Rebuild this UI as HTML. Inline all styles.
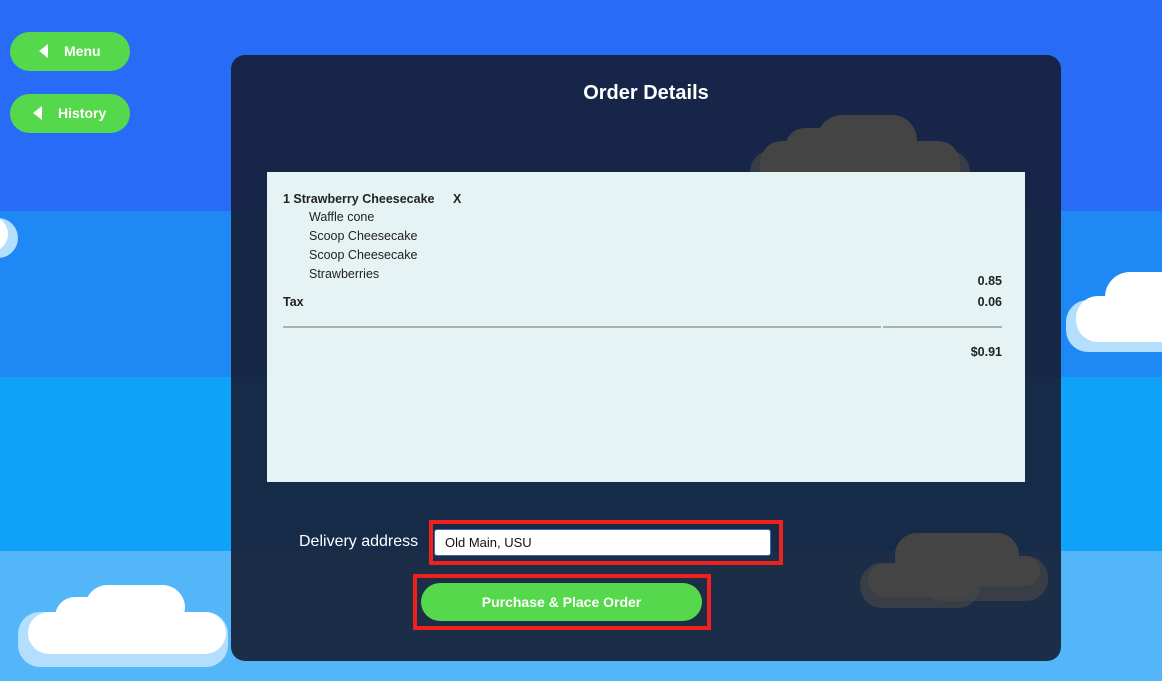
<!DOCTYPE html>
<html><head><style>
*{margin:0;padding:0;box-sizing:border-box}
body{width:1162px;height:681px;overflow:hidden;position:relative;font-family:"Liberation Sans",sans-serif;
background:linear-gradient(#276bf7 0 211px,#1e88f5 211px 377px,#10a1f9 377px 551px,#52b6f9 551px)}
.btn{position:absolute;left:10px;width:120px;height:39px;border-radius:20px;background:#55d84c;color:#fff;font-weight:bold;font-size:14px;line-height:39px}
.btn i{position:absolute;top:12px;width:0;height:0;border-top:7px solid transparent;border-bottom:7px solid transparent;border-right:9px solid #fff}
.c{position:absolute;border-radius:22px}
.panel{position:absolute;left:231px;top:55px;width:830px;height:606px;border-radius:14px;background:rgba(22,30,52,.9)}
.r{position:absolute;left:267px;top:172px;width:758px;height:310px;background:#e5f3f4;font-size:12.5px;color:#222}
.r div{position:absolute}
</style></head><body>
<div class="btn" style="top:32px"><i style="left:29px"></i><span style="position:absolute;left:54px">Menu</span></div>
<div class="btn" style="top:94px"><i style="left:23px"></i><span style="position:absolute;left:48px">History</span></div>
<div class="c" style="left:-30px;top:218px;width:48px;height:40px;background:#b3dffd"></div>
<div class="c" style="left:-30px;top:216px;width:38px;height:36px;background:#fff"></div>
<div class="c" style="left:1066px;top:300px;width:120px;height:52px;background:#b3dffd"></div>
<div class="c" style="left:1076px;top:296px;width:110px;height:46px;background:#fff"></div>
<div class="c" style="left:1105px;top:272px;width:80px;height:50px;background:#fff;border-radius:30px"></div>
<div class="c" style="left:18px;top:612px;width:210px;height:55px;background:#b3dffd"></div>
<div class="c" style="left:28px;top:612px;width:198px;height:42px;background:#fff"></div>
<div class="c" style="left:55px;top:597px;width:75px;height:40px;background:#fff"></div>
<div class="c" style="left:85px;top:585px;width:100px;height:45px;background:#fff;border-radius:30px"></div>
<div class="panel"></div>
<div class="c" style="left:750px;top:150px;width:220px;height:50px;background:rgba(70,70,70,.7)"></div>
<div class="c" style="left:760px;top:141px;width:200px;height:52px;background:#444"></div>
<div class="c" style="left:785px;top:128px;width:80px;height:40px;background:#444"></div>
<div class="c" style="left:817px;top:115px;width:100px;height:50px;background:#444;border-radius:30px"></div>
<div class="c" style="left:860px;top:563px;width:120px;height:45px;background:rgba(70,70,70,.7)"></div>
<div class="c" style="left:868px;top:563px;width:110px;height:34px;background:#444"></div>
<div class="c" style="left:895px;top:533px;width:124px;height:50px;background:#444"></div>
<div class="c" style="left:920px;top:556px;width:128px;height:45px;background:rgba(70,70,70,.7)"></div>
<div class="c" style="left:920px;top:556px;width:120px;height:30px;background:#444"></div>
<div style="position:absolute;left:231px;width:830px;top:82px;text-align:center;color:#fff;font-size:20px;font-weight:bold">Order Details</div>
<div class="r">
<div style="left:16px;top:20px;font-weight:bold">1 Strawberry Cheesecake</div>
<div style="left:186px;top:20px;font-weight:bold">X</div>
<div style="left:42px;top:38px">Waffle cone</div>
<div style="left:42px;top:57px">Scoop Cheesecake</div>
<div style="left:42px;top:76px">Scoop Cheesecake</div>
<div style="left:42px;top:95px">Strawberries</div>
<div style="right:23px;top:102px;font-weight:bold">0.85</div>
<div style="left:16px;top:123px;font-weight:bold">Tax</div>
<div style="right:23px;top:123px;font-weight:bold">0.06</div>
<div style="left:16px;top:154px;width:598px;height:2px;background:#aab0b0"></div>
<div style="left:616px;top:154px;width:119px;height:2px;background:#aab0b0"></div>
<div style="right:23px;top:173px;font-weight:bold">$0.91</div>
</div>
<div style="position:absolute;left:299px;top:533px;color:#fff;font-size:16px">Delivery address</div>
<div style="position:absolute;left:429px;top:520px;width:354px;height:45px;border:4px solid #f0211c"></div>
<div style="position:absolute;left:434px;top:529px;width:337px;height:27px;background:#fff;border:1px solid #3a6ab0;border-radius:3px;font-size:13px;line-height:25px;padding-left:10px;color:#111">Old Main, USU</div>
<div style="position:absolute;left:413px;top:574px;width:298px;height:56px;border:4px solid #f0211c"></div>
<div style="position:absolute;left:421px;top:583px;width:281px;height:38px;border-radius:19px;background:#55d84c;color:#fff;font-weight:bold;font-size:14px;text-align:center;line-height:38px">Purchase &amp; Place Order</div>
</body></html>
